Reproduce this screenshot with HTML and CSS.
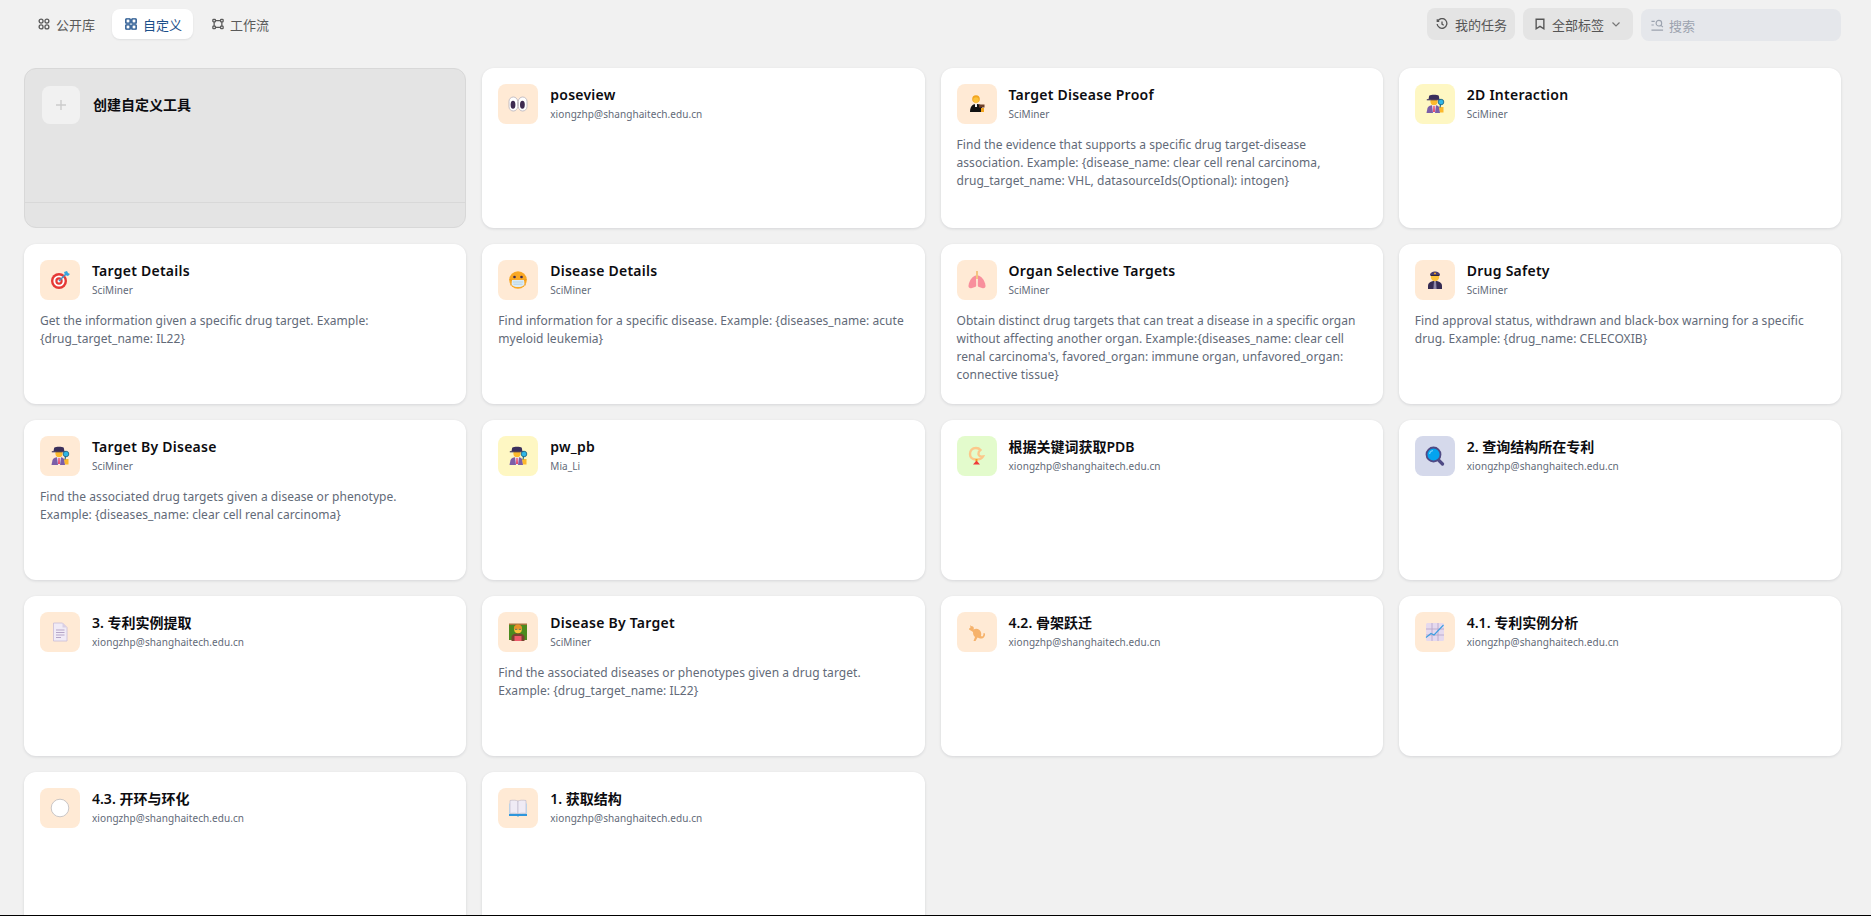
FILE: index.html
```html
<!DOCTYPE html>
<html lang="en">
<head>
  <meta charset="UTF-8">
  <title>工具</title>
  <link rel="stylesheet" href="styles.css">
</head>
<body>
  <svg class="sprite" width="0" height="0">
    <symbol id="e-eyes" viewBox="0 0 20 20">
      <rect x="1" y="3" width="8.600" height="14" rx="4.300" fill="#fff" stroke="#b5b0ba" stroke-width=".8"/>
      <rect x="10.400" y="3" width="8.600" height="14" rx="4.300" fill="#fff" stroke="#b5b0ba" stroke-width=".8"/>
      <ellipse cx="5" cy="10.800" rx="2.400" ry="4" fill="#3d2a50"/>
      <ellipse cx="14.400" cy="10.800" rx="2.400" ry="4" fill="#3d2a50"/>
    </symbol>
    <symbol id="e-judge" viewBox="0 0 20 20">
      <circle cx="9" cy="5" r="3.800" fill="#f2a51f"/>
      <circle cx="9" cy="6" r="2.800" fill="#fcc23c"/>
      <path d="M3 18c0-5 2-8 6-8s5 1 6 3v5z" fill="#111"/>
      <path d="M8 10h2v3H8z" fill="#eee"/>
      <path d="M12 10.500h5.500v3H12z" fill="#6d3f2a"/>
      <path d="M14 14h3v4h-3z" fill="#f2a51f"/>
    </symbol>
    <symbol id="e-target" viewBox="0 0 20 20">
      <circle cx="9" cy="11" r="8" fill="#e53935"/>
      <circle cx="9" cy="11" r="5.600" fill="#fff"/>
      <circle cx="9" cy="11" r="3.700" fill="#e53935"/>
      <circle cx="9" cy="11" r="1.500" fill="#fff"/>
      <path d="M9 11l7-7" stroke="#3f93c9" stroke-width="1.500"/>
      <path d="M14 2l1 3 3 1 2-2-2-1-1-2z" fill="#35a5e0"/>
    </symbol>
    <symbol id="e-mask" viewBox="0 0 20 20">
      <circle cx="10" cy="10" r="8.800" fill="#f9a825"/>
      <circle cx="6.500" cy="7" r="1.300" fill="#3d2a50"/>
      <circle cx="13.500" cy="7" r="1.300" fill="#3d2a50"/>
      <path d="M1.500 9.500l3 1h11l3-1M2 15l3-1h10l3 1" stroke="#e58f10" stroke-width=".7" fill="none"/>
      <path d="M4 10h12l.5 4.500c-1.500 2-3.500 2.500-6.500 2.500s-5-.5-6.500-2.500z" fill="#dcebf4"/>
      <path d="M5 12h10M5.500 14.200h9" stroke="#a9cde0" stroke-width=".8"/>
    </symbol>
    <symbol id="e-lungs" viewBox="0 0 20 20">
      <path d="M9 5.500C6 6 2.500 9.500 1.500 15.500c-.3 2.500 1.500 3 3.500 2.500l3-1c1-.4 1.200-1 1.200-2z" fill="#f88f9c"/>
      <path d="M11 5.500c3 .5 6.500 4 7.500 10 .3 2.500-1.500 3-3.500 2.500l-3-1c-1-.4-1.200-1-1.200-2z" fill="#f88f9c"/>
      <path d="M10 1v8" stroke="#f4c077" stroke-width="1.800"/>
    </symbol>
    <symbol id="e-police" viewBox="0 0 20 20">
      <path d="M3 19v-3c0-3.500 3-5 7-5s7 1.500 7 5v3z" fill="#352b52"/>
      <path d="M9 11h2l.6 8H8.400z" fill="#8d86a8"/>
      <circle cx="10" cy="7" r="4.200" fill="#fcc23c"/>
      <path d="M5 5c0-2 2.500-3.500 5-3.500S15 3 15 5z" fill="#4b3d6e"/>
      <path d="M5.500 5h9v1h-9z" fill="#2d2440"/>
      <path d="M9 2.700h2v1.500H9z" fill="#f2a51f"/>
    </symbol>
    <symbol id="e-spy" viewBox="0 0 20 20">
      <path d="M1.500 19l1-5c.5-2 3.500-3 6.500-3s5 1 5.500 3l.5 5z" fill="#7b5ea8"/>
      <path d="M7 11h4l-1 8H8z" fill="#f3e9f1"/>
      <path d="M8.400 12h1.200l.4 6H8z" fill="#e8476a"/>
      <circle cx="9" cy="7.600" r="3.600" fill="#fcb92c"/>
      <path d="M4.200 1.800C6 .5 12 .5 13.800 1.800L14.500 5.500H3.500z" fill="#3a2f5c"/>
      <path d="M1.800 5.200h14.400v1.100H1.800z" fill="#3a2f5c"/>
      <path d="M14 13h4.500v5.600H15z" fill="#fcb92c"/>
      <circle cx="16" cy="8" r="2.800" fill="#2fb6e6" stroke="#19607f" stroke-width=".8"/>
      <path d="M15.500 10.500l-.5 3" stroke="#19607f" stroke-width="1.100"/>
    </symbol>
    <symbol id="e-ring" viewBox="0 0 20 20">
      <path d="M9 2C5 2 3 5 3 8s2 5.500 6 5.500 6-1 7-3c-3 .5-5-1-4.500-3.500.2-1.500 1.500-2.500 2-3C12.500 2.800 11 2 9 2z" fill="none" stroke="#fcc88a" stroke-width="2.400"/>
      <path d="M8.500 13h2v2.500h-2z" fill="#f5a623"/>
      <path d="M9.500 14.500l3.500 4H6z" fill="#ef3b3b"/>
    </symbol>
    <symbol id="e-search" viewBox="0 0 20 20">
      <path d="M12.500 13l5 5" stroke="#4f4a85" stroke-width="3.200" stroke-linecap="round"/>
      <circle cx="8.500" cy="8.500" r="7" fill="#03a4ef" stroke="#4f4a85" stroke-width="1.800"/>
      <path d="M4.500 8c.3-2 1.500-3.200 3.500-3.500" stroke="#6fd0fb" stroke-width="1.200" fill="none"/>
    </symbol>
    <symbol id="e-doc" viewBox="0 0 20 20">
      <path d="M3.500 1h9l4.500 4.500v13.500H3.500z" fill="#f1ebf6" stroke="#c9bcd8" stroke-width=".8"/>
      <path d="M12.500 1v4.500H17z" fill="#d9cfe4"/>
      <path d="M6 8h8.500M6 10.500h8.500M6 13h8.500M6 15.500h5" stroke="#b5a5c7" stroke-width="1"/>
    </symbol>
    <symbol id="e-teacher" viewBox="0 0 20 20">
      <path d="M1 3h18v15H1z" fill="#4b8b1f"/>
      <path d="M1 1.500h18V3H1z" fill="#a87540"/>
      <path d="M3.500 19v-3.500C3.500 13 6 11.500 10 11.500s6.500 1.500 6.500 4V19z" fill="#7a4330"/>
      <path d="M6.500 14h7v5h-7z" fill="#ee5a6a"/>
      <circle cx="10" cy="7.500" r="3.800" fill="#fcc23c"/>
      <path d="M6 7c-.5-3 1.500-4.500 4-4.500S14.500 4 14 7c-2-.5-6-.5-8 0z" fill="#e8932a"/>
      <path d="M7 7.300h2.400M10.700 7.300h2.400" stroke="#666" stroke-width="1"/>
    </symbol>
    <symbol id="e-roo" viewBox="0 0 20 20">
      <path d="M3 3l1 1 2 .5c1 1 1 2 .5 3 2-1 4-1 6 .5 2 2 2 4 1.500 6 1.500 1 2.500 0 2.500-3l1.500.5c.3 3-1.500 5.500-5 5l-2.500-1-2 3.500H6.500l1.500-4c-1.500-1-2-3-2-5L4.500 9 2 7.500c0-1 .5-1.500 1.500-2z" fill="#f6b26b"/>
    </symbol>
    <symbol id="e-chart" viewBox="0 0 20 20">
      <rect x="1" y="1" width="18" height="18" rx="1.500" fill="#e5d9ee"/>
      <path d="M1 7h18M1 13h18M7 1v18M13 1v18" stroke="#b9a8c9" stroke-width=".9"/>
      <path d="M1 15.500l5-4 3 1.500 9.500-10" stroke="#3c9ee0" stroke-width="1.100" fill="none"/>
    </symbol>
    <symbol id="e-circle" viewBox="0 0 20 20">
      <circle cx="10" cy="10" r="8.800" fill="#fff" stroke="#bdbabd" stroke-width=".8"/>
    </symbol>
    <symbol id="e-book" viewBox="0 0 20 20">
      <path d="M1 5.500h18v12H1z" fill="#bfe0f5"/>
      <path d="M2 2.500c3-.5 6-.5 8 .5v13c-2-1-5-1-8-.5z" fill="#efebf5" stroke="#b9b4c6" stroke-width=".6"/>
      <path d="M18 2.500c-3-.5-6-.5-8 .5v13c2-1 5-1 8-.5z" fill="#efebf5" stroke="#b9b4c6" stroke-width=".6"/>
      <path d="M1 16h18v2H11l-1 .8L9 18H1z" fill="#2e96dc"/>
    </symbol>
  </svg>

  <div class="app">
    <main class="page">
      <header class="topbar">
        <nav class="tabs">
          <a class="tab">
            <svg class="ico" viewBox="0 0 14 14" fill="none" stroke="currentColor" stroke-width="1.500"><circle cx="3.600" cy="3.600" r="2.300"/><circle cx="10.400" cy="3.600" r="2.300"/><circle cx="3.600" cy="10.400" r="2.300"/><circle cx="10.400" cy="10.400" r="2.300"/></svg>
            公开库
          </a>
          <a class="tab tab-active">
            <svg class="ico" viewBox="0 0 14 14" fill="none" stroke="currentColor" stroke-width="1.600"><rect x="1" y="1" width="5" height="5" rx=".6"/><rect x="8" y="1" width="5" height="5" rx=".6"/><rect x="1" y="8" width="5" height="5" rx=".6"/><rect x="8" y="8" width="5" height="5" rx=".6"/></svg>
            自定义
          </a>
          <a class="tab">
            <svg class="ico" viewBox="0 0 14 14" fill="none" stroke="currentColor" stroke-width="1.500"><rect x="1" y="1.500" width="3" height="3" rx=".8"/><rect x="10" y="1.500" width="3" height="3" rx=".8"/><rect x="1" y="9.500" width="3" height="3" rx=".8"/><rect x="10" y="9.500" width="3" height="3" rx=".8"/><path d="M4 3h6M4 11h6M2.500 4.500v5M11.500 4.500v5"/></svg>
            工作流
          </a>
        </nav>
        <div class="actions">
          <button class="btn btn-tasks">
            <svg class="ico" viewBox="0 0 14 14" fill="none" stroke="currentColor" stroke-width="1.500"><path d="M2 3.500A5.700 5.700 0 1 1 1.300 7"/><path d="M1.500 1.500v2.300h2.300M7 4v3.200l2 1.200"/></svg>
            我的任务
          </button>
          <button class="btn btn-tags">
            <svg class="ico" viewBox="0 0 14 14" fill="none" stroke="currentColor" stroke-width="1.600"><path d="M2.500 1.500h9v11L7 9.700l-4.500 2.800z"/></svg>
            全部标签
            <svg class="chev" viewBox="0 0 10 10" fill="none" stroke="currentColor" stroke-width="1.200"><path d="M1.500 3.500L5 7l3.500-3.500"/></svg>
          </button>
          <div class="search">
            <svg class="ico" viewBox="0 0 14 14" fill="none" stroke="currentColor" stroke-width="1.200"><path d="M.5 2.500h3.500M.5 6.500h2.500M.5 12h12.500"/><circle cx="8.500" cy="4.500" r="3"/><path d="M10.800 6.800l2 2"/></svg>
            搜索
          </div>
        </div>
      </header>

      <section class="grid">
        <div class="card card-create">
          <div class="create-head">
            <div class="create-icon"><svg viewBox="0 0 12 12" fill="none" stroke="currentColor" stroke-width="1.400"><path d="M6 1v10M1 6h10"/></svg></div>
            <div class="create-title">创建自定义工具</div>
          </div>
          <div class="create-foot"></div>
        </div>

        <div class="card">
          <div class="card-head">
            <div class="emoji"><svg><use href="#e-eyes"/></svg></div>
            <div><div class="title title-en">poseview</div><div class="author">xiongzhp@shanghaitech.edu.cn</div></div>
          </div>
        </div>

        <div class="card">
          <div class="card-head">
            <div class="emoji"><svg><use href="#e-judge"/></svg></div>
            <div><div class="title title-en">Target Disease Proof</div><div class="author">SciMiner</div></div>
          </div>
          <p class="desc">Find the evidence that supports a specific drug target-disease association. Example: {disease_name: clear cell renal carcinoma, drug_target_name: VHL, datasourceIds(Optional): intogen}</p>
        </div>

        <div class="card">
          <div class="card-head">
            <div class="emoji bg-yellow"><svg><use href="#e-spy"/></svg></div>
            <div><div class="title title-en">2D Interaction</div><div class="author">SciMiner</div></div>
          </div>
        </div>

        <div class="card">
          <div class="card-head">
            <div class="emoji"><svg><use href="#e-target"/></svg></div>
            <div><div class="title title-en">Target Details</div><div class="author">SciMiner</div></div>
          </div>
          <p class="desc">Get the information given a specific drug target. Example: {drug_target_name: IL22}</p>
        </div>

        <div class="card">
          <div class="card-head">
            <div class="emoji"><svg><use href="#e-mask"/></svg></div>
            <div><div class="title title-en">Disease Details</div><div class="author">SciMiner</div></div>
          </div>
          <p class="desc">Find information for a specific disease. Example: {diseases_name: acute myeloid leukemia}</p>
        </div>

        <div class="card">
          <div class="card-head">
            <div class="emoji"><svg><use href="#e-lungs"/></svg></div>
            <div><div class="title title-en">Organ Selective Targets</div><div class="author">SciMiner</div></div>
          </div>
          <p class="desc">Obtain distinct drug targets that can treat a disease in a specific organ without affecting another organ. Example:{diseases_name: clear cell renal carcinoma's, favored_organ: immune organ, unfavored_organ: connective tissue}</p>
        </div>

        <div class="card">
          <div class="card-head">
            <div class="emoji"><svg><use href="#e-police"/></svg></div>
            <div><div class="title title-en">Drug Safety</div><div class="author">SciMiner</div></div>
          </div>
          <p class="desc">Find approval status, withdrawn and black-box warning for a specific drug. Example: {drug_name: CELECOXIB}</p>
        </div>

        <div class="card">
          <div class="card-head">
            <div class="emoji"><svg><use href="#e-spy"/></svg></div>
            <div><div class="title title-en">Target By Disease</div><div class="author">SciMiner</div></div>
          </div>
          <p class="desc">Find the associated drug targets given a disease or phenotype. Example: {diseases_name: clear cell renal carcinoma}</p>
        </div>

        <div class="card">
          <div class="card-head">
            <div class="emoji bg-yellow"><svg><use href="#e-spy"/></svg></div>
            <div><div class="title title-en">pw_pb</div><div class="author">Mia_Li</div></div>
          </div>
        </div>

        <div class="card">
          <div class="card-head">
            <div class="emoji bg-green"><svg><use href="#e-ring"/></svg></div>
            <div><div class="title">根据关键词获取PDB</div><div class="author">xiongzhp@shanghaitech.edu.cn</div></div>
          </div>
        </div>

        <div class="card">
          <div class="card-head">
            <div class="emoji bg-blue"><svg><use href="#e-search"/></svg></div>
            <div><div class="title">2. 查询结构所在专利</div><div class="author">xiongzhp@shanghaitech.edu.cn</div></div>
          </div>
        </div>

        <div class="card">
          <div class="card-head">
            <div class="emoji"><svg><use href="#e-doc"/></svg></div>
            <div><div class="title">3. 专利实例提取</div><div class="author">xiongzhp@shanghaitech.edu.cn</div></div>
          </div>
        </div>

        <div class="card">
          <div class="card-head">
            <div class="emoji"><svg><use href="#e-teacher"/></svg></div>
            <div><div class="title title-en">Disease By Target</div><div class="author">SciMiner</div></div>
          </div>
          <p class="desc">Find the associated diseases or phenotypes given a drug target. Example: {drug_target_name: IL22}</p>
        </div>

        <div class="card">
          <div class="card-head">
            <div class="emoji"><svg><use href="#e-roo"/></svg></div>
            <div><div class="title">4.2. 骨架跃迁</div><div class="author">xiongzhp@shanghaitech.edu.cn</div></div>
          </div>
        </div>

        <div class="card">
          <div class="card-head">
            <div class="emoji"><svg><use href="#e-chart"/></svg></div>
            <div><div class="title">4.1. 专利实例分析</div><div class="author">xiongzhp@shanghaitech.edu.cn</div></div>
          </div>
        </div>

        <div class="card">
          <div class="card-head">
            <div class="emoji"><svg><use href="#e-circle"/></svg></div>
            <div><div class="title">4.3. 开环与环化</div><div class="author">xiongzhp@shanghaitech.edu.cn</div></div>
          </div>
        </div>

        <div class="card">
          <div class="card-head">
            <div class="emoji"><svg><use href="#e-book"/></svg></div>
            <div><div class="title">1. 获取结构</div><div class="author">xiongzhp@shanghaitech.edu.cn</div></div>
          </div>
        </div>
      </section>
    </main>
    <div class="edge"></div>
  </div>
</body>
</html>
```

FILE: styles.css
```css
* {
  box-sizing: border-box;
}
body {
  margin: 0;
  height: 100vh;
  overflow: hidden;
  background: #f1f1f1;
  font-family: "Noto Sans", "Noto Sans CJK SC", sans-serif;
  font-size: 13px;
  color: #1d2939;
}
.sprite {
  display: block;
  height: 0;
}
.app {
  height: 100%;
  display: flex;
  flex-direction: column;
}
.page {
  flex: 1;
  min-height: 0;
  overflow: hidden;
  padding: 8px 30px 0 24px;
}
.edge {
  height: 1px;
  background: #000;
}

/* top bar */
.topbar {
  display: flex;
  justify-content: space-between;
  height: 32px;
  margin-bottom: 28px;
}
.tabs {
  display: flex;
  align-items: center;
  gap: 6px;
  margin-left: 1px;
}
.tab {
  display: flex;
  align-items: center;
  gap: 6px;
  height: 30px;
  padding: 0 11px 0 13px;
  border-radius: 8px;
  color: #5a5a5a;
}
.tab-active {
  background: #fff;
  color: #1c4f8a;
  box-shadow: 0 1px 2px rgba(16, 24, 40, 0.08);
}
.ico {
  width: 12px;
  height: 12px;
  flex: none;
}
.actions {
  display: flex;
  gap: 8px;
}
.btn {
  display: flex;
  align-items: center;
  gap: 7px;
  height: 32px;
  padding: 0 8px 0 9px;
  border: none;
  border-radius: 8px;
  background: #e4e4e4;
  color: #555;
  font: inherit;
}
.btn-tags {
  padding: 0 12px 0 11px;
  gap: 6px;
}
.chev {
  width: 10px;
  height: 10px;
  margin-left: 1px;
  color: #777;
}
.search {
  display: flex;
  align-items: center;
  gap: 5px;
  width: 200px;
  height: 32px;
  margin-top: 1px;
  padding: 0 10px;
  border-radius: 8px;
  background: #e5e7eb;
  color: #9ca3af;
}
.search .ico {
  width: 13px;
  height: 13px;
}

/* cards */
.grid {
  display: grid;
  grid-template-columns: repeat(4, 1fr);
  grid-auto-rows: 160px;
  gap: 16px;
}
.card {
  background: #fff;
  border-radius: 12px;
  padding: 16px;
  box-shadow: 0 1px 3px rgba(16, 24, 40, 0.12);
}
.card-head {
  display: flex;
  gap: 12px;
  height: 40px;
}
.emoji {
  width: 40px;
  height: 40px;
  flex: none;
  display: flex;
  align-items: center;
  justify-content: center;
  border-radius: 8px;
  background: #ffead5;
}
.emoji svg {
  width: 20px;
  height: 20px;
}
.bg-yellow {
  background: #fef7c3;
}
.bg-green {
  background: #e3fbcc;
}
.bg-blue {
  background: #d5d9eb;
}
.title {
  font-size: 14px;
  font-weight: 600;
  line-height: 20px;
  margin-top: 1px;
  color: #0c0c10;
}
.title-en {
  letter-spacing: 0.25px;
}
.author {
  font-size: 10px;
  line-height: 18px;
  letter-spacing: 0.07px;
  color: #626a78;
}
.desc {
  margin: 12px 0 0;
  font-size: 12px;
  line-height: 18px;
  letter-spacing: 0.05px;
  color: #626a78;
}

/* create card */
.card-create {
  display: flex;
  flex-direction: column;
  padding: 0;
  background: #e4e4e4;
  border: 1px solid #d8d8d8;
  box-shadow: none;
}
.create-head {
  flex: 1;
  display: flex;
  gap: 13px;
  padding: 17px;
}
.create-icon {
  width: 38px;
  height: 38px;
  display: flex;
  align-items: center;
  justify-content: center;
  border-radius: 8px;
  background: #f1f1f1;
  color: #ccc;
}
.create-icon svg {
  width: 12px;
  height: 12px;
}
.create-title {
  font-size: 14px;
  font-weight: 600;
  line-height: 38px;
  color: #0c0c10;
}
.create-foot {
  height: 25px;
  border-top: 1px solid #d8d8d8;
}
```
